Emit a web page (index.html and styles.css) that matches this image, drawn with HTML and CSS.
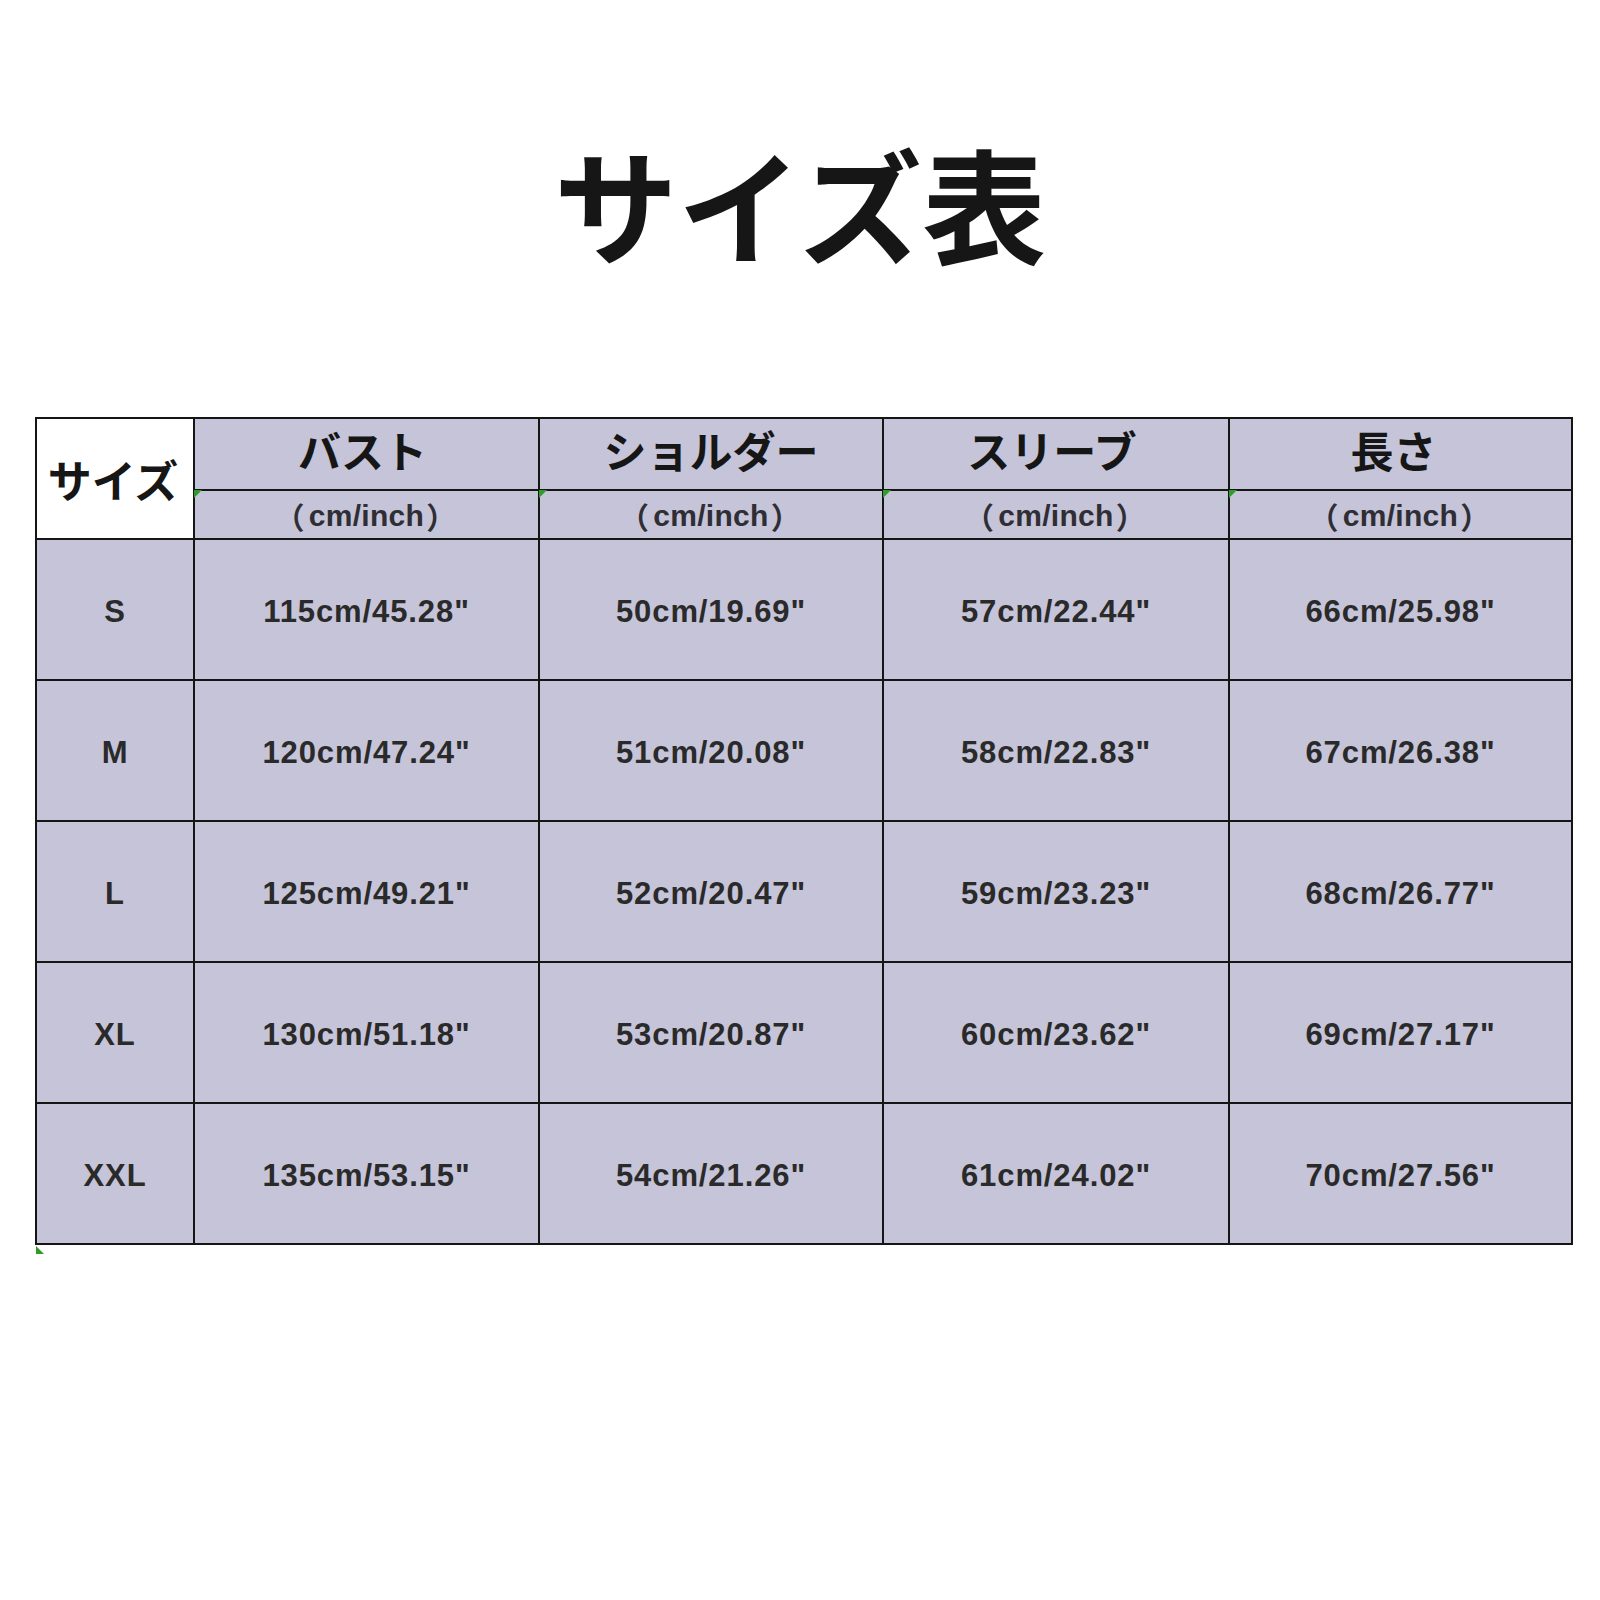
FILE: index.html
```html
<!DOCTYPE html>
<html lang="ja">
<head>
<meta charset="utf-8">
<title>サイズ表</title>
<link rel="stylesheet" href="styles.css">
</head>
<body>
<h1 class="title">サイズ表</h1>
<div class="chart">
  <div class="cell corner">サイズ</div>
  <div class="cell head c2">バスト</div>
  <div class="cell head c3">ショルダー</div>
  <div class="cell head c4">スリーブ</div>
  <div class="cell head c5">長さ</div>
  <div class="cell unit c2"><span class="mark"></span><span class="lp">（</span>cm/inch<span class="rp">）</span></div>
  <div class="cell unit c3"><span class="mark"></span><span class="lp">（</span>cm/inch<span class="rp">）</span></div>
  <div class="cell unit c4"><span class="mark"></span><span class="lp">（</span>cm/inch<span class="rp">）</span></div>
  <div class="cell unit c5"><span class="mark"></span><span class="lp">（</span>cm/inch<span class="rp">）</span></div>

  <div class="cell size">S</div>
  <div class="cell val">115cm/45.28"</div>
  <div class="cell val">50cm/19.69"</div>
  <div class="cell val">57cm/22.44"</div>
  <div class="cell val">66cm/25.98"</div>

  <div class="cell size">M</div>
  <div class="cell val">120cm/47.24"</div>
  <div class="cell val">51cm/20.08"</div>
  <div class="cell val">58cm/22.83"</div>
  <div class="cell val">67cm/26.38"</div>

  <div class="cell size">L</div>
  <div class="cell val">125cm/49.21"</div>
  <div class="cell val">52cm/20.47"</div>
  <div class="cell val">59cm/23.23"</div>
  <div class="cell val">68cm/26.77"</div>

  <div class="cell size">XL</div>
  <div class="cell val">130cm/51.18"</div>
  <div class="cell val">53cm/20.87"</div>
  <div class="cell val">60cm/23.62"</div>
  <div class="cell val">69cm/27.17"</div>

  <div class="cell size">XXL</div>
  <div class="cell val">135cm/53.15"</div>
  <div class="cell val">54cm/21.26"</div>
  <div class="cell val">61cm/24.02"</div>
  <div class="cell val">70cm/27.56"</div>
  <span class="mark bottom-mark"></span>
</div>
</body>
</html>
```
FILE: styles.css
```css
html, body {
  margin: 0;
  padding: 0;
  background: #ffffff;
}

body {
  width: 1600px;
  height: 1600px;
  font-family: "Liberation Sans", "Noto Sans CJK JP", sans-serif;
}

.title {
  margin: 139px 0 0 0;
  font-family: "Noto Sans CJK JP", sans-serif;
  font-weight: 700;
  font-size: 124px;
  line-height: 125px;
  text-align: center;
  color: #161616;
}

.chart {
  position: relative;
  margin: 153px 0 0 35px;
  width: max-content;
  display: grid;
  grid-template-columns: 156px 343px 342px 344px 341px;
  grid-template-rows: 70px 47px 139px 139px 139px 139px 139px;
  gap: 2px;
  padding: 2px;
  background: #151515;
}

.cell {
  position: relative;
  background: #c5c4d8;
  display: flex;
  align-items: center;
  justify-content: center;
  color: #2a2a2a;
  box-sizing: border-box;
}

.corner {
  grid-row: span 2;
  background: #ffffff;
  font-family: "Noto Sans CJK JP", sans-serif;
  font-weight: 700;
  font-size: 44px;
  color: #161616;
  padding-right: 4px;
}

.head {
  font-family: "Noto Sans CJK JP", sans-serif;
  font-weight: 700;
  font-size: 43px;
  color: #161616;
  padding-bottom: 10px;
  padding-right: 8px;
}

.head.c3 {
  padding-right: 0;
}

.head.c5 {
  padding-right: 14px;
}

.unit {
  font-weight: 700;
  font-size: 30px;
  letter-spacing: 0.3px;
  color: #2e2e34;
  padding-top: 2px;
}

.lp {
  margin-left: -6px;
  margin-right: 4px;
}

.rp {
  margin-left: 2px;
  margin-right: -4px;
}

.size, .val {
  font-weight: 700;
  font-size: 31px;
  letter-spacing: 0.9px;
  padding-top: 4px;
}

.mark {
  position: absolute;
  left: -1px;
  top: -1px;
  width: 0;
  height: 0;
  border-top: 8px solid #2f9b2a;
  border-right: 8px solid transparent;
}

.bottom-mark {
  left: 1px;
  top: auto;
  bottom: -9px;
  border-top: 0;
  border-bottom: 8px solid #2f9b2a;
  border-right: 8px solid transparent;
}
```
